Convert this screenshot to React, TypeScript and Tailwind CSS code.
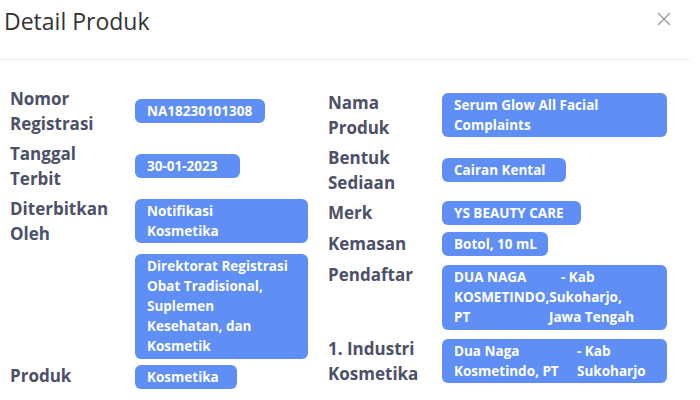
import { X } from 'lucide-react'

const Pill = ({ children, className = '' }: { children: React.ReactNode; className?: string }) => (
  <div
    className={`whitespace-nowrap rounded-[6px] bg-[#5f8ff4] px-3 py-[2px] text-[13.5px] font-bold leading-[20px] text-white ${className}`}
  >
    {children}
  </div>
)

const Label = ({ children, className = '' }: { children: React.ReactNode; className?: string }) => (
  <div className={`text-[17px] font-bold leading-[25px] text-[#4c5068] ${className}`}>{children}</div>
)

export default function App() {
  return (
    <div
      className="h-[400px] w-[700px] overflow-hidden bg-white"
      style={{ fontFamily: '"Open Sans", "Noto Sans", sans-serif' }}
    >
      <div className="flex h-[59px] items-start justify-between pl-[4px] pr-[25px] pt-[5px]">
        <h1 className="text-[23px] font-medium leading-[32px] text-[#333]">Detail Produk</h1>
        <X className="mt-[3px] h-[22px] w-[22px] text-[#9a9a9a]" strokeWidth={1.4} />
      </div>
      <div className="mr-[10px] h-px bg-[#ececec]" />

      <div className="flex pt-[26px]">
        {/* left column */}
        <div className="w-[318px] pl-[10px]">
          <div className="flex items-center">
            <Label className="w-[125px]">
              Nomor
              <br />
              Registrasi
            </Label>
            <Pill className="w-[130px]">NA18230101308</Pill>
          </div>
          <div className="mt-[5px] flex items-center">
            <Label className="w-[125px]">
              Tanggal
              <br />
              Terbit
            </Label>
            <Pill className="w-[105px]">30-01-2023</Pill>
          </div>
          <div className="mt-[5px] flex items-center">
            <Label className="w-[125px]">
              Diterbitkan
              <br />
              Oleh
            </Label>
            <Pill className="w-[173px]">
              Notifikasi
              <br />
              Kosmetika
            </Pill>
          </div>
          <div className="mt-[8px] flex">
            <div className="w-[125px]" />
            <Pill className="w-[173px] pb-[3px]">
              Direktorat Registrasi
              <br />
              Obat Tradisional,
              <br />
              Suplemen
              <br />
              Kesehatan, dan
              <br />
              Kosmetik
            </Pill>
          </div>
          <div className="mt-[6px] flex items-center">
            <Label className="w-[125px] -mt-[3px]">Produk</Label>
            <Pill className="w-[102px]">Kosmetika</Pill>
          </div>
        </div>

        {/* right column */}
        <div className="pl-[10px] pt-[4px]">
          <div className="flex items-center">
            <Label className="w-[114px]">
              Nama
              <br />
              Produk
            </Label>
            <Pill className="w-[225px]">
              Serum Glow All Facial
              <br />
              Complaints
            </Pill>
          </div>
          <div className="mt-[5px] flex items-center">
            <Label className="w-[114px]">
              Bentuk
              <br />
              Sediaan
            </Label>
            <Pill className="w-[124px]">Cairan Kental</Pill>
          </div>
          <div className="mt-[5px] flex items-center">
            <Label className="w-[114px]">Merk</Label>
            <Pill className="w-[139px]">YS BEAUTY CARE</Pill>
          </div>
          <div className="mt-[6px] flex items-center">
            <Label className="w-[114px]">Kemasan</Label>
            <Pill className="w-[106px]">Botol, 10 mL</Pill>
          </div>
          <div className="mt-[9px] flex items-start">
            <Label className="w-[114px] -mt-[3px]">Pendaftar</Label>
            <Pill className="w-[225px] pb-[3px]">
              <div className="flex">
                <span className="w-[107px]">DUA NAGA</span>
                <span>- Kab</span>
              </div>
              <div>KOSMETINDO,Sukoharjo,</div>
              <div className="flex">
                <span className="w-[95px]">PT</span>
                <span>Jawa Tengah</span>
              </div>
            </Pill>
          </div>
          <div className="mt-[6px] flex items-center">
            <Label className="w-[114px]">
              1. Industri
              <br />
              Kosmetika
            </Label>
            <Pill className="w-[225px]">
              <div className="flex">
                <span className="w-[123px]">Dua Naga</span>
                <span>- Kab</span>
              </div>
              <div className="flex">
                <span className="w-[123px]">Kosmetindo, PT</span>
                <span>Sukoharjo</span>
              </div>
            </Pill>
          </div>
        </div>
      </div>
    </div>
  )
}
